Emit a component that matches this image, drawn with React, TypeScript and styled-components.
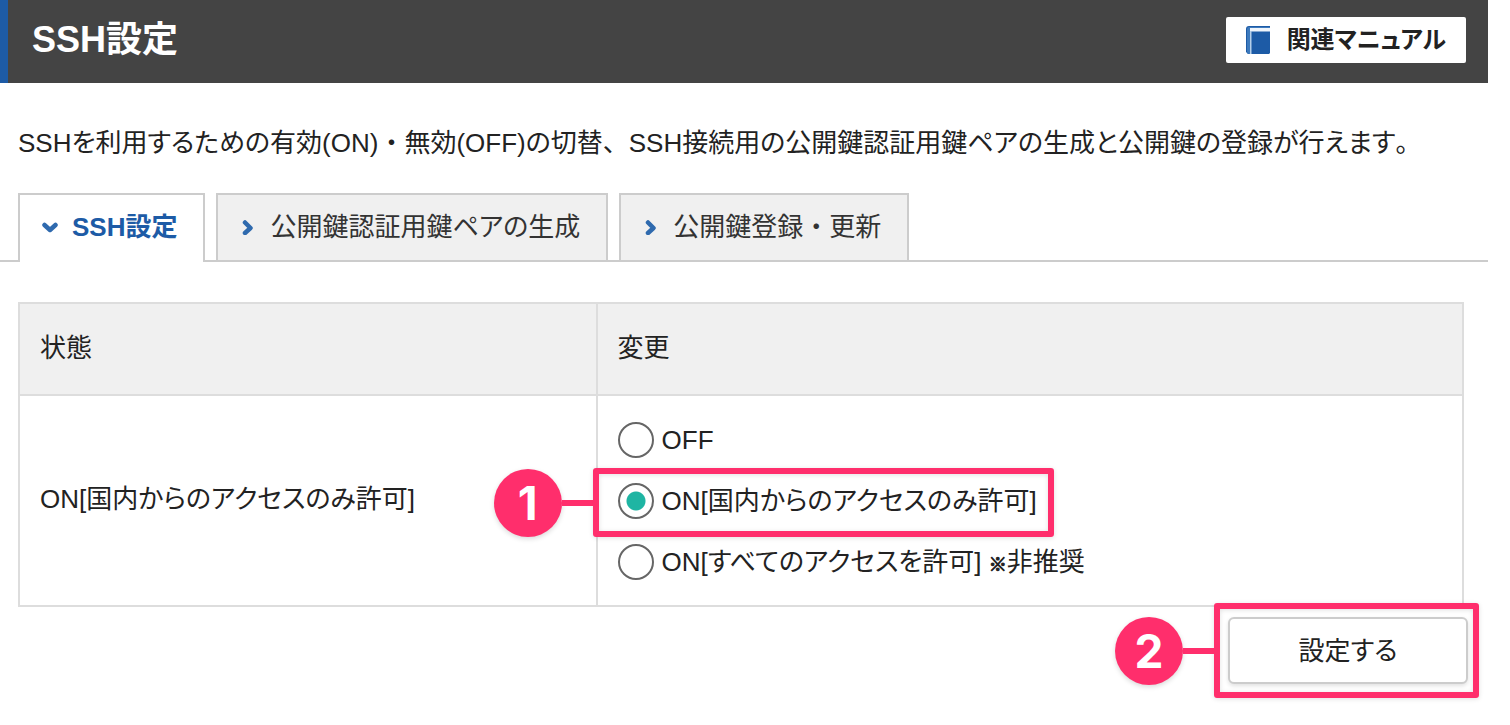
import React, { useState } from "react";
import styled, { createGlobalStyle, css } from "styled-components";

const blue = "#1d5ba6";
const pink = "#ff2e6c";

const GlobalStyle = createGlobalStyle`
  *, *::before, *::after { box-sizing: border-box; }
  body {
    margin: 0;
    background: #fff;
    color: #222;
    font-family: "Liberation Sans", "Noto Sans CJK JP", sans-serif;
    font-size: 26px;
    line-height: 36px;
    font-feature-settings: "palt";
  }
  button, input { font: inherit; color: inherit; font-feature-settings: inherit; }
`;

const Page = styled.div`
  padding-right: 22px;
`;

const Header = styled.header`
  display: flex;
  align-items: center;
  justify-content: space-between;
  padding: 17px 22px 20px 24px;
  border-left: 8px solid ${blue};
  background: #444;
`;

const Title = styled.h1`
  margin: 0;
  color: #fff;
  font-size: 36px;
  line-height: 46px;
`;

const ManualLink = styled.a`
  display: flex;
  align-items: center;
  gap: 17px;
  height: 46px;
  padding: 0 20px;
  border-radius: 2px;
  background: #fff;
  color: #222;
  font-size: 24px;
  font-weight: bold;
  text-decoration: none;
`;

const Lead = styled.p`
  margin: 0;
  padding: 42px 18px 32px;
`;

/* Punctuation that keeps its full em width */
const FullWidth = styled.span`
  font-feature-settings: normal;
`;

const Tabs = styled.nav`
  display: flex;
  gap: 11px;
  padding-left: 18px;
  box-shadow: inset 0 -2px #ccc;
`;

const Tab = styled.button<{ $active: boolean }>`
  display: flex;
  align-items: center;
  gap: 14px;
  height: 69px;
  padding: 0 26px 2px 22px;
  border: 2px solid #ccc;
  background: #f0f0f0;
  color: #333;
  cursor: pointer;
  ${(p) =>
    p.$active &&
    css`
      padding-bottom: 4px;
      border-bottom: 0;
      background: #fff;
      color: ${blue};
      font-weight: bold;
    `}
`;

const Panel = styled.main`
  padding: 40px 24px 0 18px;
`;

const Table = styled.table`
  width: 100%;
  border-collapse: collapse;
  table-layout: fixed;
`;

const HeadCell = styled.th<{ $width?: string }>`
  width: ${(p) => p.$width ?? "auto"};
  height: 92px;
  padding: 0 20px 2px;
  border: 2px solid #ddd;
  background: #f0f0f0;
  font-weight: normal;
  text-align: left;
`;

const Cell = styled.td`
  padding: 26px 20px 25px;
  border: 2px solid #ddd;
`;

const StatusCell = styled(Cell)`
  padding: 20px 20px 24px;
`;

const Options = styled.div`
  display: flex;
  flex-direction: column;
  align-items: flex-start;
  gap: 25px;
`;

const Option = styled.label`
  position: relative;
  display: flex;
  align-items: center;
  gap: 8px;
  height: 36px;
  cursor: pointer;
`;

const Radio = styled.input`
  appearance: none;
  width: 36px;
  height: 36px;
  margin: 0;
  border: 2px solid #666;
  border-radius: 50%;
  background: #fff;
  &:checked {
    background: radial-gradient(circle, #1fb5a3 9px, #fff 10px);
  }
`;

const Mark = styled.span`
  font-size: 18px;
  line-height: 18px;
  -webkit-text-stroke: 1px currentColor;
`;

const Actions = styled.div`
  display: flex;
  justify-content: flex-end;
  padding: 10px 20px 20px;
`;

const SubmitWrap = styled.div`
  position: relative;
`;

const Submit = styled.button`
  display: block;
  width: 240px;
  height: 67px;
  padding: 0;
  border: 2px solid #ccc;
  border-radius: 6px;
  background: #fff;
  box-shadow: 0 2px 4px rgba(0, 0, 0, 0.12);
  cursor: pointer;
`;

const Frame = styled.span<{ $inset: string }>`
  position: absolute;
  inset: ${(p) => p.$inset};
  border: 6px solid ${pink};
  border-radius: 3px;
  box-shadow: 0 1px 5px rgba(0, 0, 0, 0.12), inset 0 1px 5px rgba(0, 0, 0, 0.12);
  pointer-events: none;
`;

const Callout = styled.span`
  position: absolute;
  top: 50%;
  right: 100%;
  display: flex;
  align-items: center;
  margin-right: 5px;
  transform: translateY(-50%);
`;

const Badge = styled.span`
  display: flex;
  align-items: center;
  justify-content: center;
  width: 68px;
  height: 68px;
  border-radius: 50%;
  background: ${pink};
  box-shadow: 0 2px 5px rgba(0, 0, 0, 0.15);
  color: #fff;
  font-family: Inter, sans-serif;
  font-size: 46px;
  font-weight: 700;
`;

const Connector = styled.span`
  width: 32px;
  height: 6px;
  background: ${pink};
`;

const BookIcon = () => (
  <svg width="24" height="28" viewBox="0 0 24 28" aria-hidden="true">
    <path d="M3 0H24V27L23 28H2L0 26V3Q0 0 3 0Z" fill={blue} />
    <path d="M1 3Q1 1 3 1H24V2H4V28H3Q1 28 1 26Z" fill="#3d7abd" />
    <path d="M4 2H24V5.500H4Z" fill="#eef4fb" />
    <path d="M4 5H5.500V28H4Z" fill="#b5cfe9" />
  </svg>
);

const Chevron = ({ down }: { down?: boolean }) => (
  <svg
    width="16"
    height="16"
    viewBox="0 0 16 16"
    fill="none"
    stroke="#2f6aae"
    strokeWidth="4.500"
    strokeLinecap="round"
    strokeLinejoin="round"
    aria-hidden="true"
  >
    <path d={down ? "M2.500 6L8 11L13.500 6" : "M5 3.500L10.500 9L5 14"} />
  </svg>
);

const Marker = ({ n, inset }: { n: number; inset: string }) => (
  <Frame $inset={inset}>
    <Callout>
      <Badge>{n}</Badge>
      <Connector />
    </Callout>
  </Frame>
);

const tabs = [
  { id: "ssh", label: "SSH設定" },
  { id: "generate", label: "公開鍵認証用鍵ペアの生成" },
  {
    id: "register",
    label: (
      <span>
        公開鍵登録<FullWidth>・</FullWidth>更新
      </span>
    ),
  },
];

export default function App() {
  const [tab, setTab] = useState("ssh");
  const [value, setValue] = useState("domestic");
  const radio = (v: string) => (
    <Radio type="radio" name="ssh" value={v} checked={value === v} onChange={() => setValue(v)} />
  );

  return (
    <Page lang="ja">
      <GlobalStyle />
      <Header>
        <Title>SSH設定</Title>
        <ManualLink href="#manual">
          <BookIcon />
          関連マニュアル
        </ManualLink>
      </Header>
      <Lead>
        SSHを利用するための有効(ON)<FullWidth>・</FullWidth>無効(OFF)の切替<FullWidth>、</FullWidth>
        SSH接続用の公開鍵認証用鍵ペアの生成と公開鍵の登録が行えます<FullWidth>。</FullWidth>
      </Lead>
      <Tabs>
        {tabs.map(({ id, label }) => (
          <Tab key={id} type="button" $active={id === tab} onClick={() => setTab(id)}>
            <Chevron down={id === tab} />
            {label}
          </Tab>
        ))}
      </Tabs>
      <Panel>
        <Table>
          <thead>
            <tr>
              <HeadCell scope="col" $width="40%">状態</HeadCell>
              <HeadCell scope="col">変更</HeadCell>
            </tr>
          </thead>
          <tbody>
            <tr>
              <StatusCell>ON[国内からのアクセスのみ許可]</StatusCell>
              <Cell>
                <Options>
                  <Option>
                    {radio("off")}
                    <span>OFF</span>
                  </Option>
                  <Option>
                    {radio("domestic")}
                    <span>ON[国内からのアクセスのみ許可]</span>
                    <Marker n={1} inset="-15px -17px -18px -25px" />
                  </Option>
                  <Option>
                    {radio("all")}
                    <span>
                      ON[すべてのアクセスを許可] <Mark>※</Mark>非推奨
                    </span>
                  </Option>
                </Options>
              </Cell>
            </tr>
          </tbody>
        </Table>
      </Panel>
      <Actions>
        <SubmitWrap>
          <Submit type="button">設定する</Submit>
          <Marker n={2} inset="-14px -11px -14px -14px" />
        </SubmitWrap>
      </Actions>
    </Page>
  );
}
